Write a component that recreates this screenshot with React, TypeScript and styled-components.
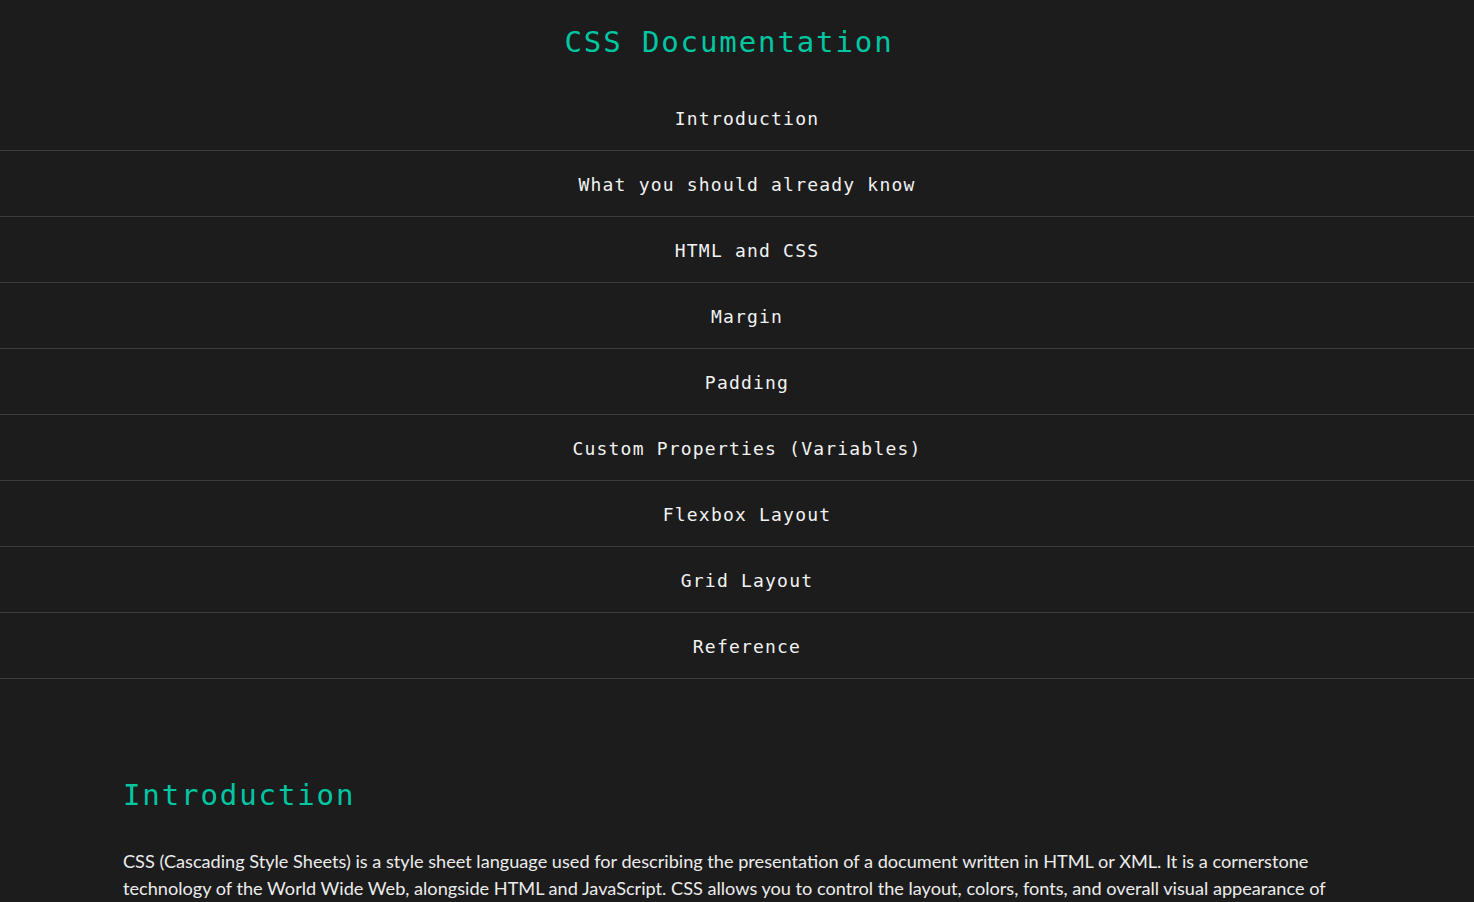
import React from "react";
import styled, { createGlobalStyle } from "styled-components";

const ACCENT = "#00c7a3";
const BG = "#1c1c1c";
const LINE = "#3c3c3c";
const MONO = `"DejaVu Sans Mono", "Liberation Mono", monospace`;

const GlobalStyle = createGlobalStyle`
  html, body {
    margin: 0;
    padding: 0;
    background: ${BG};
  }
  body {
    font-family: Lato, "Open Sans", sans-serif;
    color: #ececec;
  }
`;

const Page = styled.div`
  background: ${BG};
  min-height: 100vh;
`;

const NavBar = styled.nav`
  display: flex;
  flex-direction: column;
`;

const SiteTitle = styled.h1`
  margin: 0;
  padding: 22px 16px 23px 0;
  font-family: ${MONO};
  font-size: 29px;
  font-weight: 500;
  line-height: 40px;
  letter-spacing: 1.9px;
  color: ${ACCENT};
  text-align: center;
`;

const NavList = styled.ul`
  list-style: none;
  margin: 0;
  padding: 0;
`;

const NavItem = styled.li`
  border-bottom: 1px solid ${LINE};
`;

const NavLink = styled.a`
  display: block;
  height: 65px;
  padding: 2px 0 0 20px;
  box-sizing: border-box;
  line-height: 63px;
  text-align: center;
  font-family: ${MONO};
  font-size: 18px;
  letter-spacing: 1.2px;
  color: #f2f2f2;
  text-decoration: none;
  cursor: pointer;
`;

const Main = styled.main`
  padding: 96px 123px 40px;
`;

const Section = styled.section`
  margin-bottom: 48px;
`;

const SectionTitle = styled.h2`
  margin: 0 0 33px;
  font-family: ${MONO};
  font-size: 29px;
  font-weight: 500;
  line-height: 40px;
  letter-spacing: 1.9px;
  color: ${ACCENT};
`;

const Paragraph = styled.p`
  margin: 0 0 18px;
  font-size: 18.15px;
  line-height: 27.2px;
  color: #ececec;
`;

const links = [
  "Introduction",
  "What you should already know",
  "HTML and CSS",
  "Margin",
  "Padding",
  "Custom Properties (Variables)",
  "Flexbox Layout",
  "Grid Layout",
  "Reference",
];

const App = () => {
  return (
    <>
      <GlobalStyle />
      <Page>
        <NavBar>
          <SiteTitle>CSS Documentation</SiteTitle>
          <NavList>
            {links.map((l) => (
              <NavItem key={l}>
                <NavLink href={"#" + l.replace(/\s+/g, "_")}>{l}</NavLink>
              </NavItem>
            ))}
          </NavList>
        </NavBar>
        <Main>
          <Section id="Introduction">
            <SectionTitle>Introduction</SectionTitle>
            <Paragraph>
              CSS (Cascading Style Sheets) is a style sheet language used for
              describing the presentation of a document written in HTML or XML.
              It is a cornerstone technology of the World Wide Web, alongside
              HTML and JavaScript. CSS allows you to control the layout, colors,
              fonts, and overall visual appearance of web pages.
            </Paragraph>
            <Paragraph>
              CSS is designed to enable the separation of content and
              presentation, including layout, colors, and fonts. This
              separation can improve content accessibility and provide more
              flexibility and control in the specification of presentation
              characteristics.
            </Paragraph>
          </Section>
        </Main>
      </Page>
    </>
  );
};

export default App;
